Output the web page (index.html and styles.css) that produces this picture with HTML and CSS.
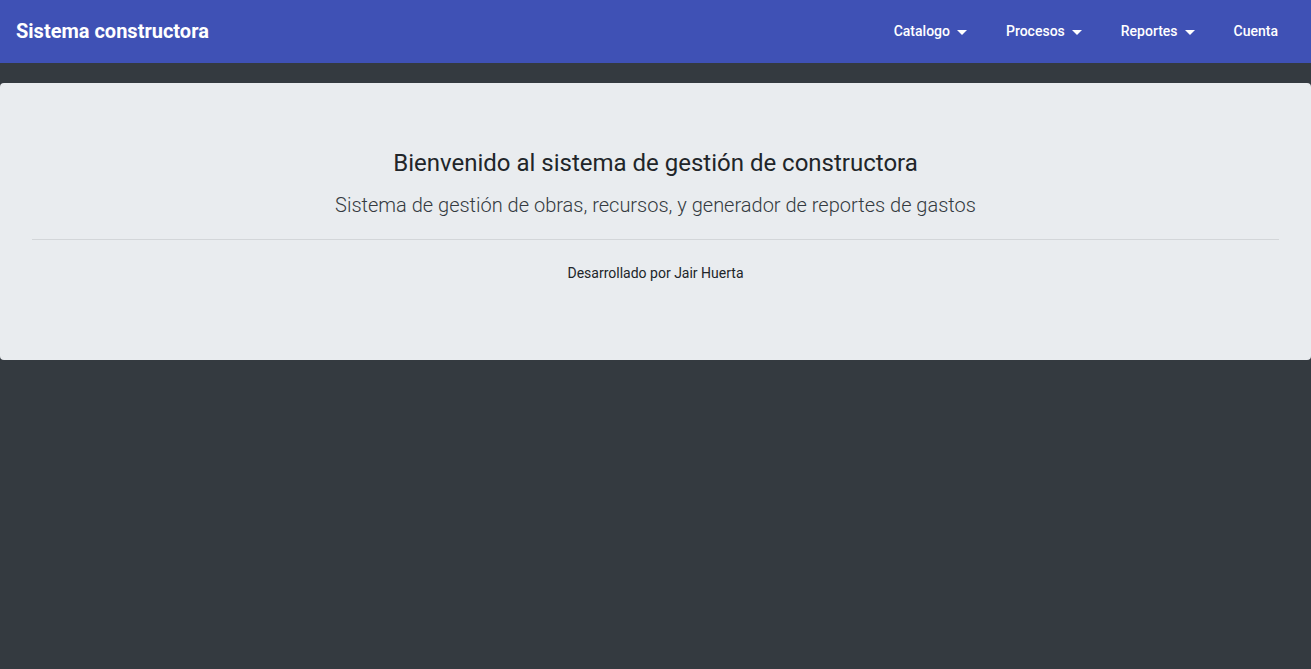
FILE: index.html
```html
<!DOCTYPE html>
<html lang="es">
<head>
<meta charset="utf-8">
<title>Sistema constructora</title>
<link rel="stylesheet" href="styles.css">
</head>
<body>
<header class="navbar">
  <a class="brand" href="#">Sistema constructora</a>
  <nav class="nav">
    <a class="nav-link" href="#">Catalogo<span class="caret"></span></a>
    <a class="nav-link" href="#">Procesos<span class="caret"></span></a>
    <a class="nav-link" href="#">Reportes<span class="caret"></span></a>
    <a class="nav-link" href="#">Cuenta</a>
  </nav>
</header>
<main class="content">
  <section class="jumbotron">
    <h1 class="title">Bienvenido al sistema de gestión de constructora</h1>
    <p class="lead">Sistema de gestión de obras, recursos, y generador de reportes de gastos</p>
    <hr class="divider">
    <p class="credit">Desarrollado por Jair Huerta</p>
  </section>
</main>
</body>
</html>
```

FILE: styles.css
```css
* { box-sizing: border-box; }
html, body { margin: 0; padding: 0; }
body {
  background: #343a40;
  font-family: Roboto, "Noto Sans", Arial, sans-serif;
  color: #212529;
  min-height: 669px;
}
.navbar {
  height: 63px;
  background: #3f51b5;
  display: flex;
  align-items: center;
  justify-content: space-between;
  padding: 0 16px 1px;
}
.brand {
  color: #fff;
  text-decoration: none;
  font-size: 20px;
  font-weight: 700;
}
.nav {
  display: flex;
  align-items: center;
  gap: 39px;
  padding-right: 17px;
}
.nav-link {
  color: #fff;
  text-decoration: none;
  font-size: 14px;
  font-weight: 500;
  display: flex;
  align-items: center;
}
.caret {
  display: inline-block;
  width: 0;
  height: 0;
  margin-left: 7px;
  margin-top: 2px;
  border-left: 5px solid transparent;
  border-right: 5px solid transparent;
  border-top: 5px solid #fff;
}
.content {
  padding-top: 20px;
}
.jumbotron {
  background: #e9ecef;
  border-radius: 4px;
  padding: 66px 32px 77px;
  text-align: center;
}
.title {
  margin: 0;
  font-size: 24px;
  line-height: 28px;
  font-weight: 400;
  color: #212529;
}
.lead {
  margin: 16px 0 0;
  font-size: 20px;
  line-height: 24px;
  font-weight: 300;
  color: #343a40;
}
.divider {
  margin: 22px 0 0;
  border: 0;
  border-top: 1px solid #d3d6d9;
}
.credit {
  margin: 23px 0 0;
  font-size: 14px;
  line-height: 20px;
  color: #212529;
}
```
